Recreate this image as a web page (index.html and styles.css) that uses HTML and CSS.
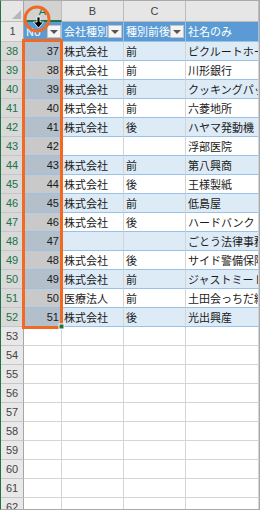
FILE: index.html
```html
<!DOCTYPE html>
<html lang="ja">
<head>
    <meta charset="UTF-8">
    <title>会社一覧 - 選択範囲</title>
    <link rel="stylesheet" href="styles.css">
</head>
<body>
    <div class="sheet">
        <!-- column letters -->
        <div class="row cols">
            <div class="corner"><span class="corner-tri"></span></div>
            <div class="sel">A</div>
            <div>B</div>
            <div>C</div>
            <div></div>
        </div>

        <!-- table header (row 1) -->
        <div class="row thead">
            <div class="num">1</div>
            <div class="a"><span class="label">No</span><span class="filter"></span></div>
            <div><span class="label">会社種別</span><span class="filter"></span></div>
            <div><span class="label">種別前後</span><span class="filter"></span></div>
            <div><span class="label">社名のみ</span></div>
        </div>

        <div class="row t band"><div class="num sel">38</div><div class="no">37</div><div>株式会社</div><div>前</div><div>ピクルートホールディングス</div></div>
        <div class="row t"><div class="num sel">39</div><div class="no">38</div><div>株式会社</div><div>前</div><div>川形銀行</div></div>
        <div class="row t band"><div class="num sel">40</div><div class="no">39</div><div>株式会社</div><div>前</div><div>クッキングパッド</div></div>
        <div class="row t"><div class="num sel">41</div><div class="no">40</div><div>株式会社</div><div>前</div><div>六菱地所</div></div>
        <div class="row t band"><div class="num sel">42</div><div class="no">41</div><div>株式会社</div><div>後</div><div>ハヤマ発動機</div></div>
        <div class="row t"><div class="num sel">43</div><div class="no">42</div><div></div><div></div><div>浮部医院</div></div>
        <div class="row t band"><div class="num sel">44</div><div class="no">43</div><div>株式会社</div><div>前</div><div>第八興商</div></div>
        <div class="row t"><div class="num sel">45</div><div class="no">44</div><div>株式会社</div><div>後</div><div>王様製紙</div></div>
        <div class="row t band"><div class="num sel">46</div><div class="no">45</div><div>株式会社</div><div>前</div><div>低島屋</div></div>
        <div class="row t"><div class="num sel">47</div><div class="no">46</div><div>株式会社</div><div>後</div><div>ハードバンク・グループ</div></div>
        <div class="row t band"><div class="num sel">48</div><div class="no">47</div><div></div><div></div><div>ごとう法律事務所</div></div>
        <div class="row t"><div class="num sel">49</div><div class="no">48</div><div>株式会社</div><div>後</div><div>サイド警備保障</div></div>
        <div class="row t band"><div class="num sel">50</div><div class="no">49</div><div>株式会社</div><div>前</div><div>ジャストミートシステム</div></div>
        <div class="row t"><div class="num sel">51</div><div class="no">50</div><div>医療法人</div><div>前</div><div>土田会っちだ総合病院</div></div>
        <div class="row t band"><div class="num sel">52</div><div class="no">51</div><div>株式会社</div><div>後</div><div>光出興産</div></div>

        <div class="row"><div class="num">53</div><div></div><div></div><div></div><div></div></div>
        <div class="row"><div class="num">54</div><div></div><div></div><div></div><div></div></div>
        <div class="row"><div class="num">55</div><div></div><div></div><div></div><div></div></div>
        <div class="row"><div class="num">56</div><div></div><div></div><div></div><div></div></div>
        <div class="row"><div class="num">57</div><div></div><div></div><div></div><div></div></div>
        <div class="row"><div class="num">58</div><div></div><div></div><div></div><div></div></div>
        <div class="row"><div class="num">59</div><div></div><div></div><div></div><div></div></div>
        <div class="row"><div class="num">60</div><div></div><div></div><div></div><div></div></div>
        <div class="row"><div class="num">61</div><div></div><div></div><div></div><div></div></div>
        <div class="row"><div class="num">62</div><div></div><div></div><div></div><div></div></div>

        <!-- annotation: selected range, circle + arrow on the header -->
        <svg class="marks" width="258" height="508" viewBox="0 0 258 508">
            <rect x="22.5" y="39.5" width="38" height="287" fill="none" stroke="#f06a24" stroke-width="3"/>
            <rect x="58" y="323" width="5" height="5" fill="#217346" stroke="#fff" stroke-width="1"/>
            <circle cx="36" cy="18" r="12" fill="none" stroke="#f06a24" stroke-width="3"/>
            <polygon points="36,16 39,16 39,21 42.5,21 37.5,27 32.5,21 36,21" fill="#000" stroke="#fff" stroke-width="0.8"/>
        </svg>
    </div>
</body>
</html>
```

FILE: styles.css
```css
* {
    margin: 0;
    padding: 0;
    box-sizing: border-box;
}

body {
    width: 260px;
    height: 510px;
    overflow: hidden;
    background: #fff;
    font-family: "Liberation Sans", "Noto Sans CJK JP", sans-serif;
    font-size: 11px;
}

.sheet {
    position: relative;
    width: 260px;
    height: 510px;
    border: 1px solid #a9a9a9;
    border-left-color: #217346;
    overflow: hidden;
}

.row {
    display: grid;
    grid-template-columns: 23px 38px 62px 62px 1fr;
    height: 19px;
}

.row > div {
    border-right: 1px solid #d4d4d4;
    border-bottom: 1px solid #d4d4d4;
    padding: 0 2px;
    line-height: 18px;
    white-space: nowrap;
    overflow: hidden;
    color: #1a1a1a;
    font-family: "Noto Sans CJK JP", sans-serif;
}

/* headers */
.cols {
    height: 21px;
}

.cols > div {
    background: #e6e6e6;
    border-color: #bcbcbc;
    text-align: center;
    line-height: 20px;
    color: #444;
    font-family: "Liberation Sans", sans-serif;
}

.cols > .sel {
    background: #d2d2d2;
    color: #217346;
    border-bottom: 2px solid #217346;
}

.cols > .corner {
    display: flex;
    align-items: flex-end;
    justify-content: flex-end;
    padding: 0 2px 2px 0;
    border-right-color: #a6a6a6;
}

.corner-tri {
    width: 0;
    height: 0;
    border-left: 9px solid transparent;
    border-bottom: 9px solid #b7b7b7;
}

.row > .num {
    background: #e8e8e8;
    border-right-color: #a6a6a6;
    border-bottom-color: #c6c6c6;
    text-align: center;
    color: #444;
    font-family: "Liberation Sans", sans-serif;
}

.row > .num.sel {
    background: #d9d9d9;
    color: #217346;
}

/* table header row */
.thead {
    height: 20px;
}

.thead > div {
    display: flex;
    align-items: center;
    padding: 0 1px 0 2px;
    background: #5b9bd5;
    border-color: #9bc2e6;
    color: #fff;
    line-height: 19px;
}

.thead > .a {
    padding-right: 0;
}

.thead > .num {
    display: block;
}

.label {
    flex: 1;
    overflow: hidden;
}

.filter {
    flex: none;
    width: 14px;
    height: 13px;
    background: #f4f4f4;
    border: 1px solid #c4c4c4;
    display: flex;
    align-items: center;
    justify-content: center;
}

.filter::after {
    content: "";
    border-left: 4px solid transparent;
    border-right: 4px solid transparent;
    border-top: 4px solid #555;
}

/* table body */
.t > div {
    background: #fff;
    border-bottom-color: #9bc2e6;
}

.t.band > div {
    background: #ddebf7;
}

.t > .no {
    background: #c9c9c9;
    text-align: right;
    font-family: "Liberation Sans", sans-serif;
}

.t.band > .no {
    background: #b3bfcb;
}

.marks {
    position: absolute;
    left: 0;
    top: 0;
    pointer-events: none;
}
```
